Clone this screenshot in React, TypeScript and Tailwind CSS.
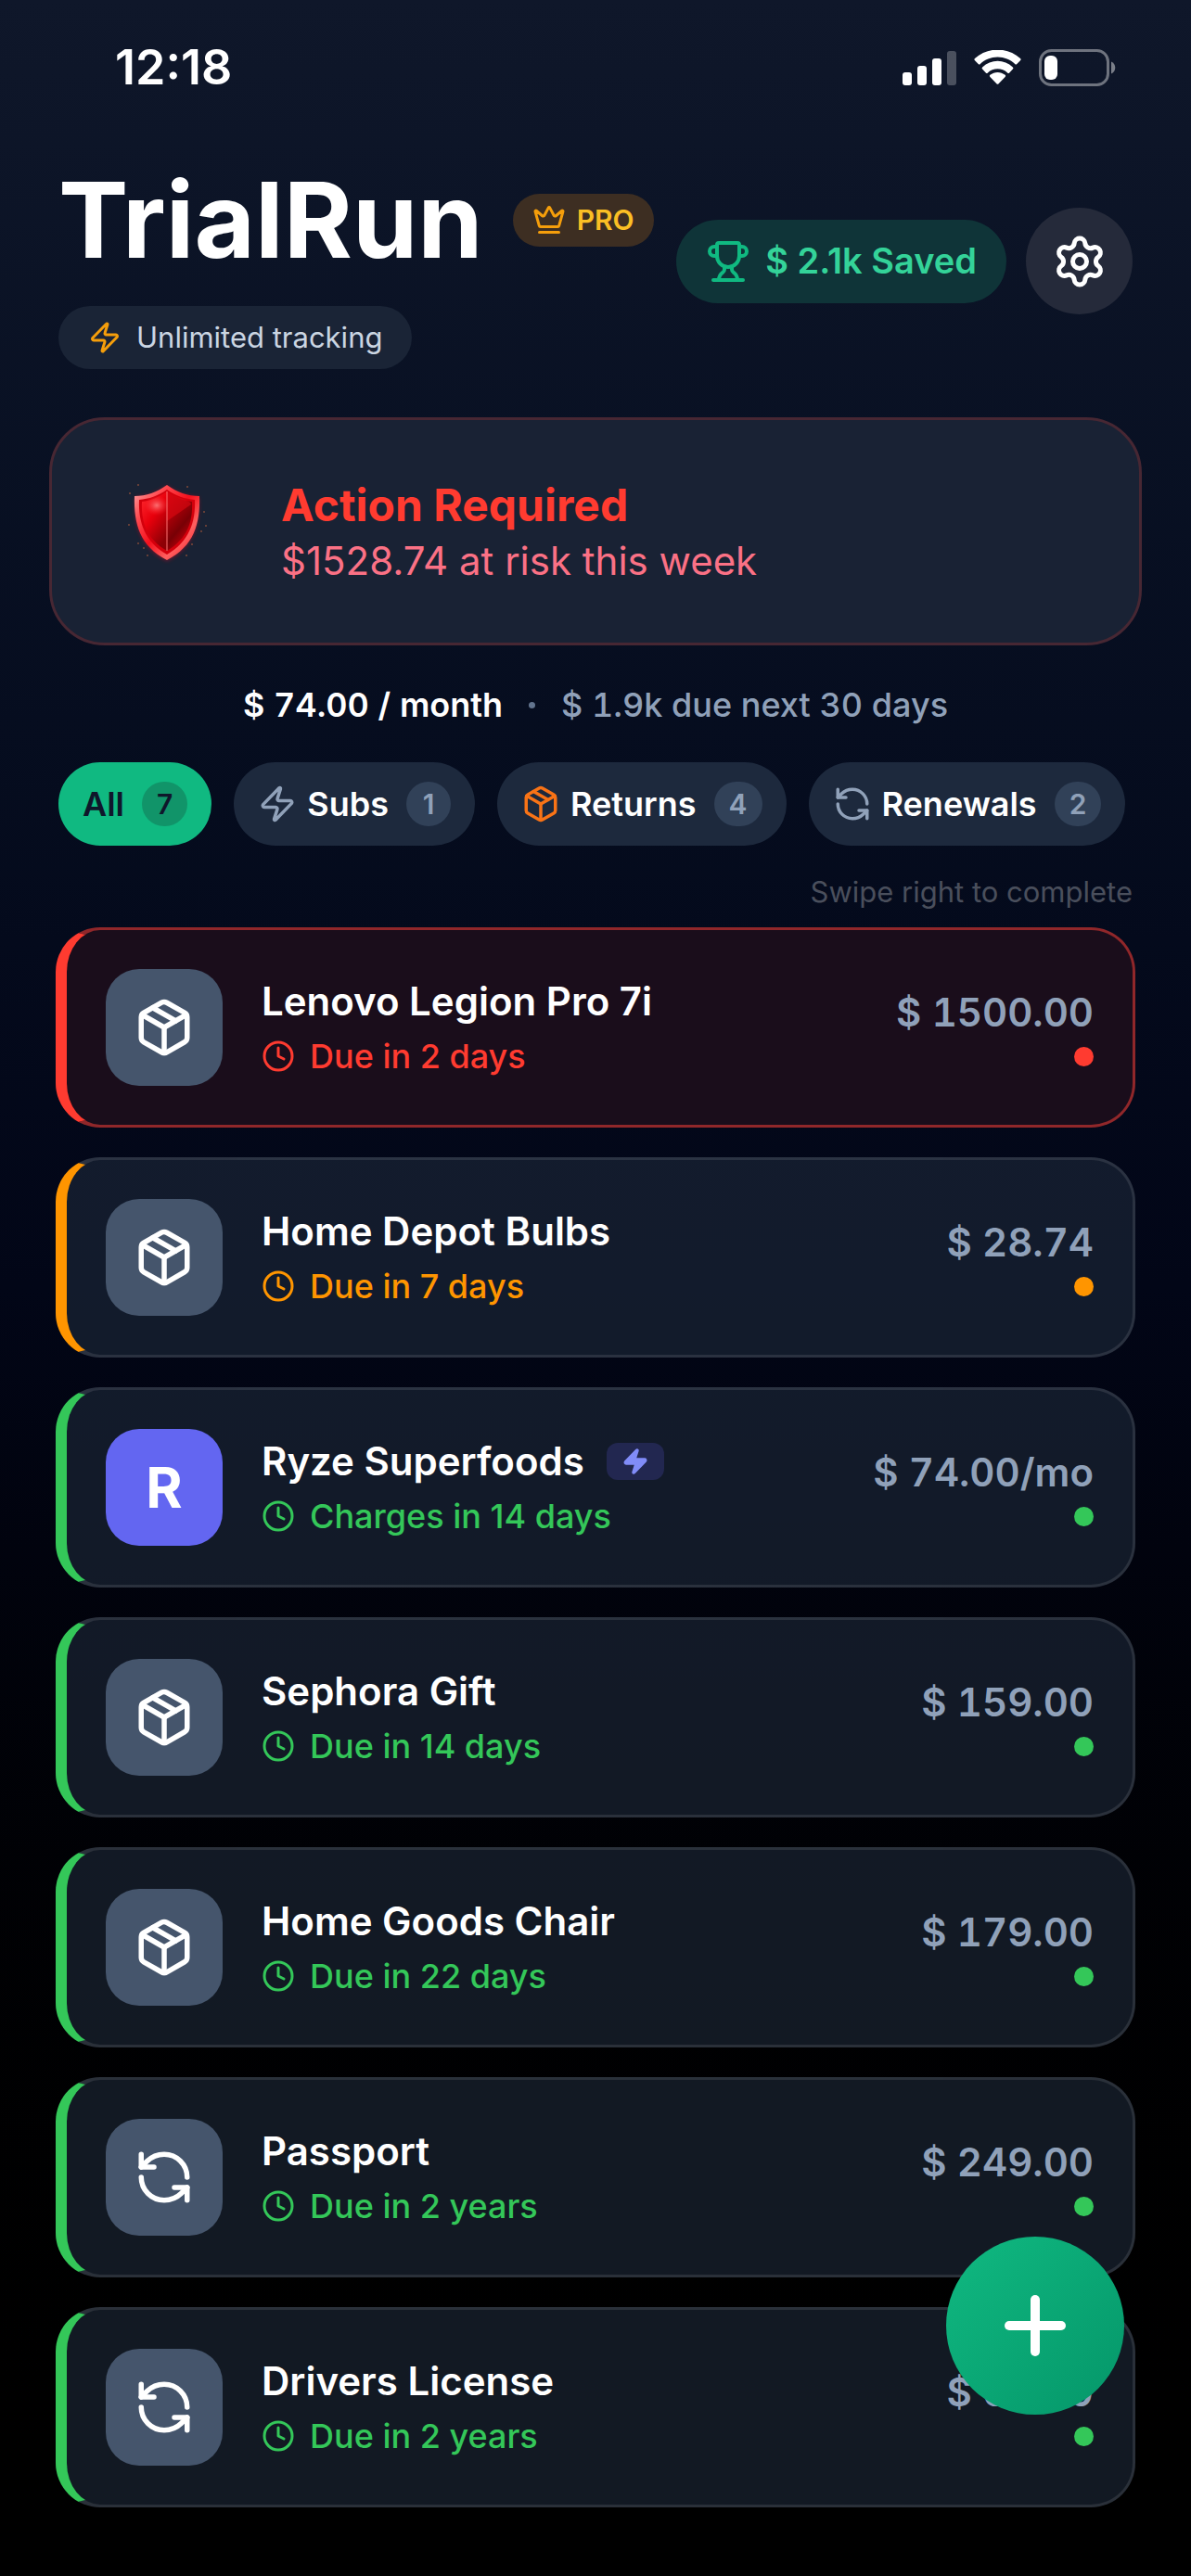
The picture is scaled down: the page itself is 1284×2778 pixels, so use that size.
import { useState } from "react";
import { Clock, Crown, Package, Plus, RefreshCcw, Settings, Trophy, Zap } from "lucide-react";
import type { LucideIcon } from "lucide-react";
import clsx from "clsx";

type Tone = "red" | "orange" | "green";
type Kind = "subs" | "returns" | "renewals";

interface Item {
    name: string;
    due: string;
    amount: string;
    tone: Tone;
    kind: Kind;
}

interface Filter {
    id: "all" | Kind;
    label: string;
    icon?: LucideIcon;
    iconColor?: string;
}

const items: Item[] = [
    { name: "Lenovo Legion Pro 7i", due: "Due in 2 days", amount: "$ 1500.00", tone: "red", kind: "returns" },
    { name: "Home Depot Bulbs", due: "Due in 7 days", amount: "$ 28.74", tone: "orange", kind: "returns" },
    { name: "Ryze Superfoods", due: "Charges in 14 days", amount: "$ 74.00/mo", tone: "green", kind: "subs" },
    { name: "Sephora Gift", due: "Due in 14 days", amount: "$ 159.00", tone: "green", kind: "returns" },
    { name: "Home Goods Chair", due: "Due in 22 days", amount: "$ 179.00", tone: "green", kind: "returns" },
    { name: "Passport", due: "Due in 2 years", amount: "$ 249.00", tone: "green", kind: "renewals" },
    { name: "Drivers License", due: "Due in 2 years", amount: "$ 65.00", tone: "green", kind: "renewals" },
];

const filters: Filter[] = [
    { id: "all", label: "All" },
    { id: "subs", label: "Subs", icon: Zap, iconColor: "text-slate-400" },
    { id: "returns", label: "Returns", icon: Package, iconColor: "text-[#f97316]" },
    { id: "renewals", label: "Renewals", icon: RefreshCcw, iconColor: "text-slate-400" },
];

const toneText = {
    red: "text-[#ff3b30]",
    orange: "text-[#ff9500]",
    green: "text-[#34c759]",
};

const toneDot = {
    red: "bg-[#ff3b30]",
    orange: "bg-[#ff9500]",
    green: "bg-[#34c759]",
};

const toneCard = {
    red: "border-[#90272a] border-l-[#ff3b30] bg-[#1a0d1b]",
    orange: "border-white/10 border-l-[#ff9500] bg-[#1e293b]/60",
    green: "border-white/10 border-l-[#34c759] bg-[#1e293b]/60",
};

function StatusBar() {
    return (
        <div className="flex items-center justify-between pl-[124px] pr-[81px] pt-12">
            <span className="text-[52px] leading-[50px] font-semibold">12:18</span>
            <div className="flex items-center gap-[19px]">
                <svg className="w-[58px] h-[38px]" viewBox="0 0 58 38" fill="#fff">
                    <rect x="0" y="24" width="10" height="14" rx="3" />
                    <rect x="16" y="17" width="10" height="21" rx="3" />
                    <rect x="32" y="9" width="10" height="29" rx="3" />
                    <rect x="48" y="1" width="10" height="37" rx="3" opacity=".25" />
                </svg>
                <svg className="w-[51px] h-[38px]" viewBox="0 0 51 38" fill="#fff">
                    <path d="M25.500 7.600C32.700 7.600 39.300 10.400 44.200 15.100a1.500 1.500 0 0 0 2.100 0l3.700-3.800a1.500 1.500 0 0 0 0-2.200C36.400-3.600 14.600-3.600 1 9.100a1.500 1.500 0 0 0 0 2.200l3.700 3.800a1.500 1.500 0 0 0 2.100 0C11.700 10.400 18.300 7.600 25.500 7.600z" />
                    <path d="M25.500 20.300c3.900 0 7.700 1.500 10.600 4.100a1.500 1.500 0 0 0 2.100 0l3.700-3.800a1.500 1.500 0 0 0 0-2.200c-9.200-8.900-23.600-8.900-32.800 0a1.500 1.500 0 0 0 0 2.200l3.700 3.800a1.500 1.500 0 0 0 2.100 0c2.900-2.600 6.700-4.100 10.600-4.100z" />
                    <path d="M33.600 29a1.500 1.500 0 0 0 0-2.200c-4.700-3.900-11.500-3.900-16.200 0a1.500 1.500 0 0 0 0 2.200l7 7.200a1.500 1.500 0 0 0 2.200 0z" />
                </svg>
                <svg className="w-[83px] h-10" viewBox="0 0 83 40">
                    <rect x="1.500" y="1.500" width="73" height="37" rx="12" fill="none" stroke="#fff" strokeOpacity=".4" strokeWidth="3" />
                    <path d="M78 13.500c2.600 1.100 4.300 3.600 4.300 6.500s-1.700 5.400-4.300 6.500z" fill="#fff" opacity=".45" />
                    <rect x="6" y="7" width="14" height="26" rx="6" fill="#fff" />
                </svg>
            </div>
        </div>
    );
}

function Shield() {
    return (
        <svg className="w-[90px] h-[100px] mb-4" viewBox="0 0 90 100" role="img" aria-label="Alert shield">
            <defs>
                <linearGradient id="rim" x1="0" y1="0" x2="1" y2="1">
                    <stop offset="0" stopColor="#ffa8a8" />
                    <stop offset=".25" stopColor="#ff4a50" />
                    <stop offset=".5" stopColor="#f5101c" />
                    <stop offset=".72" stopColor="#ff6060" />
                    <stop offset="1" stopColor="#f5101c" />
                </linearGradient>
                <linearGradient id="faceLeft" x1="0" y1="0" x2=".6" y2="1">
                    <stop offset="0" stopColor="#ff2a30" />
                    <stop offset=".5" stopColor="#e8000c" />
                    <stop offset="1" stopColor="#8d0006" />
                </linearGradient>
                <linearGradient id="faceRight" x1="0" y1="0" x2=".5" y2="1">
                    <stop offset="0" stopColor="#d4000c" />
                    <stop offset=".4" stopColor="#a80008" />
                    <stop offset=".7" stopColor="#780005" />
                    <stop offset="1" stopColor="#c0000a" />
                </linearGradient>
                <radialGradient id="shine">
                    <stop offset="0" stopColor="#ff8a8a" stopOpacity=".8" />
                    <stop offset="1" stopColor="#ff3038" stopOpacity="0" />
                </radialGradient>
                <filter id="glow" x="-30%" y="-30%" width="160%" height="160%">
                    <feGaussianBlur stdDeviation="2" />
                </filter>
            </defs>
            <path d="M45 9C56 17 66 20 79 21C81 50 74 75 45 90C16 75 9 50 11 21C24 20 34 17 45 9z" fill="#ff1020" opacity=".4" filter="url(#glow)" />
            <path d="M45 8C56 16 67 20 80 20C81 50 74 74 45 89C16 74 9 50 10 20C23 20 34 16 45 8z" fill="url(#rim)" />
            <path d="M45 13C55 20 64 23 75 24C76 48 69 69 45 83C21 69 14 48 15 24C26 23 35 20 45 13z" fill="#d4000c" />
            <path d="M45 15C54 21 62 25 72 26C73 48 67 66 45 79z" fill="url(#faceRight)" />
            <path d="M45 15C36 21 28 25 18 26C17 48 23 66 45 79z" fill="url(#faceLeft)" />
            <path d="M45 47L71 29C71 24 54 22 45 15z" fill="#e00812" opacity=".6" />
            <ellipse cx="34" cy="30" rx="13" ry="11" fill="url(#shine)" />
            <path d="M45 15V79" stroke="#ff7474" strokeWidth="1" />
            <g fill="#c2603c" opacity=".6">
                <circle cx="14" cy="8" r="1" />
                <circle cx="67" cy="10" r="1" />
                <circle cx="5" cy="17" r="1" />
                <circle cx="4" cy="51" r="1" />
                <circle cx="14" cy="71" r="1" />
                <circle cx="20" cy="76" r="1" />
                <circle cx="24" cy="84" r="1" />
                <circle cx="85" cy="37" r="1" />
                <circle cx="87" cy="52" r="1" />
                <circle cx="82" cy="58" r="1" />
                <circle cx="72" cy="72" r="1" />
                <circle cx="66" cy="84" r="1" />
            </g>
        </svg>
    );
}

function ItemCard({ item }: { item: Item }) {
    const Icon = item.kind === "renewals" ? RefreshCcw : Package;

    return (
        <li className={clsx("flex items-center h-[216px] rounded-[48px] border-[3px] border-l-[12px] px-[42px]", toneCard[item.tone])}>
            <div
                className={clsx(
                    "flex items-center justify-center shrink-0 size-[126px] rounded-[36px]",
                    item.kind === "subs" ? "bg-[#6366f1]" : "bg-slate-600"
                )}
            >
                {item.kind === "subs" ? (
                    <span className="text-[60px] leading-none font-bold">{item.name[0]}</span>
                ) : (
                    <Icon className="size-[66px]" strokeWidth={2} />
                )}
            </div>
            <div className="flex-1 ml-[42px]">
                <div className="flex items-center gap-6">
                    <h2 className="text-[42px] leading-[54px] font-semibold">{item.name}</h2>
                    {item.kind === "subs" && (
                        <span className="flex items-center justify-center w-[62px] h-10 rounded-xl bg-[#222750]">
                            <Zap className="size-[30px] fill-[#818cf8] text-[#818cf8]" />
                        </span>
                    )}
                </div>
                <p className={clsx("flex items-center gap-4 mt-2 text-[36px] leading-[48px] font-medium", toneText[item.tone])}>
                    <Clock className="size-9" strokeWidth={2} />
                    {item.due}
                </p>
            </div>
            <div className="flex flex-col items-end gap-3">
                <span className="text-[42px] leading-[50px] font-semibold tabular-nums text-slate-400">{item.amount}</span>
                <span className={clsx("size-[21px] rounded-full", toneDot[item.tone])} />
            </div>
        </li>
    );
}

export default function App() {
    const [active, setActive] = useState<Filter["id"]>("all");

    const countFor = (id: Filter["id"]) => (id === "all" ? items.length : items.filter((item) => item.kind === id).length);
    const visible = active === "all" ? items : items.filter((item) => item.kind === active);

    return (
        <div className="min-h-screen bg-linear-to-b from-[#0f172a] via-[#020617] to-black font-['Inter',sans-serif] text-white">
            <StatusBar />

            <header className="flex items-center justify-between px-[63px] mt-[67px]">
                <div>
                    <div className="flex items-center gap-8">
                        <h1 className="text-[113px] leading-[144px] font-bold">TrialRun</h1>
                        <span className="flex items-center gap-3 h-[57px] px-[21px] rounded-full bg-[#3d2e22] text-[30px] font-semibold text-[#fbbf24]">
                            <Crown className="size-9 text-[#f59e0b]" />
                            PRO
                        </span>
                    </div>
                    <p className="flex items-center w-fit gap-4 h-[68px] mt-[21px] px-8 rounded-full bg-[#1a2436] text-[31px] text-slate-300">
                        <Zap className="size-9 text-[#f59e0b]" />
                        Unlimited tracking
                    </p>
                </div>
                <div className="flex items-center gap-[21px]">
                    <span className="flex items-center gap-4 h-[90px] px-8 rounded-full bg-[#0f3438] text-[38px] font-semibold text-[#34d399]">
                        <Trophy className="size-12 text-[#10b981]" />
                        $ 2.1k Saved
                    </span>
                    <button aria-label="Settings" className="flex items-center justify-center size-[115px] rounded-full bg-[#252a3a]">
                        <Settings className="size-[60px]" strokeWidth={2} />
                    </button>
                </div>
            </header>

            <section className="flex items-center h-[246px] mx-[53px] mt-[52px] px-[79px] gap-[78px] rounded-[60px] border-[3px] border-[#472733] bg-[#192234]">
                <Shield />
                <div className="pt-1">
                    <h2 className="text-[48px] leading-[60px] font-bold text-[#ff3b30]">Action Required</h2>
                    <p className="text-[42px] leading-[60px] text-[#fb7185]">$1528.74 at risk this week</p>
                </div>
            </section>

            <p className="flex items-center justify-center gap-7 mt-10 text-[36px] leading-[48px] tabular-nums">
                <span className="font-semibold">$ 74.00 / month</span>
                <span className="size-[7px] rounded-full bg-slate-500" />
                <span className="font-medium text-slate-400">$ 1.9k due next 30 days</span>
            </p>

            <nav className="flex gap-6 px-[63px] mt-[38px]">
                {filters.map(({ id, label, icon: Icon, iconColor }) => (
                    <button
                        key={id}
                        onClick={() => setActive(id)}
                        className={clsx(
                            "flex items-center h-[90px] px-[26px] rounded-full text-[36px] font-semibold",
                            active === id ? "bg-[#10b981] text-slate-900" : "bg-slate-800 text-white"
                        )}
                    >
                        {Icon && <Icon className={clsx("size-[42px] mr-[11px]", iconColor)} strokeWidth={2} />}
                        {label}
                        <span
                            className={clsx(
                                "flex items-center justify-center min-w-12 h-12 ml-[19px] px-4 rounded-full text-[30px]",
                                active === id ? "bg-[#119469]" : "bg-slate-700 text-slate-400"
                            )}
                        >
                            {countFor(id)}
                        </span>
                    </button>
                ))}
            </nav>

            <p className="px-[63px] mt-7 mb-4 text-right text-[31px] leading-[44px] text-[#4a4f5c]">Swipe right to complete</p>

            <ul className="flex flex-col gap-8 px-[60px] pb-[74px]">
                {visible.map((item) => (
                    <ItemCard key={item.name} item={item} />
                ))}
            </ul>

            <button
                aria-label="Add item"
                className="fixed right-[72px] bottom-[174px] flex items-center justify-center size-48 rounded-full bg-linear-to-br from-[#10b981] to-[#059669]"
            >
                <Plus className="size-24" strokeWidth={2.5} />
            </button>
        </div>
    );
}
